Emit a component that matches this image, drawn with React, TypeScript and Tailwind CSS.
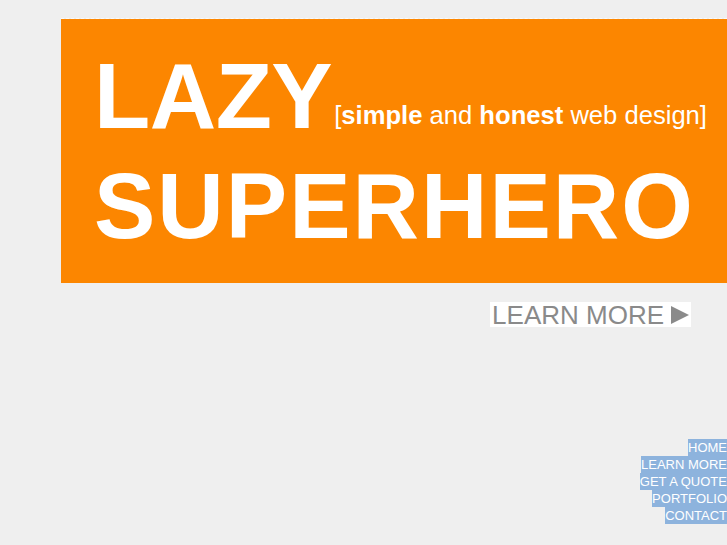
import React from 'react';

const links = ['HOME', 'LEARN MORE', 'GET A QUOTE', 'PORTFOLIO', 'CONTACT'];

const App: React.FC = () => {
  return (
    <div className="min-h-screen bg-[#efefef] pt-[18px] font-['Liberation_Sans',Arial,sans-serif]">
      <div className="ml-[61px] border-t border-dashed border-[#fafafa]">
        <header className="bg-[#fc8600] h-[264px] pl-[33px] pt-[31px] text-white">
          <div className="flex items-baseline">
            <h1 className="text-[92px] leading-none font-bold tracking-[-0.5px]">LAZY</h1>
            <p className="ml-[2px] text-[25.6px] leading-none relative top-[-4px]">
              [<b>simple</b> and <b>honest</b> web design]
            </p>
          </div>
          <h2 className="mt-[18px] text-[92px] leading-none font-bold tracking-[2px]">SUPERHERO</h2>
        </header>
      </div>

      <div className="flex justify-end pr-[36px] mt-[19px]">
        <a href="#" className="flex items-center bg-white h-[25px] pl-[2px] pr-[1px] text-[#8a8a8a] text-[26px] leading-none">
          <span>LEARN MORE</span>
          <svg width="20" height="20" viewBox="0 0 20 20" className="ml-[6px]">
            <polygon points="1,1 19,10 1,19" fill="#8a8a8a" />
          </svg>
        </a>
      </div>

      <nav className="flex flex-col items-end mt-[112px] text-[13px] leading-[17px] text-white">
        {links.map((l) => (
          <a key={l} href="#" className="bg-[#8db3dd]">
            {l}
          </a>
        ))}
      </nav>
    </div>
  );
};

export default App;
